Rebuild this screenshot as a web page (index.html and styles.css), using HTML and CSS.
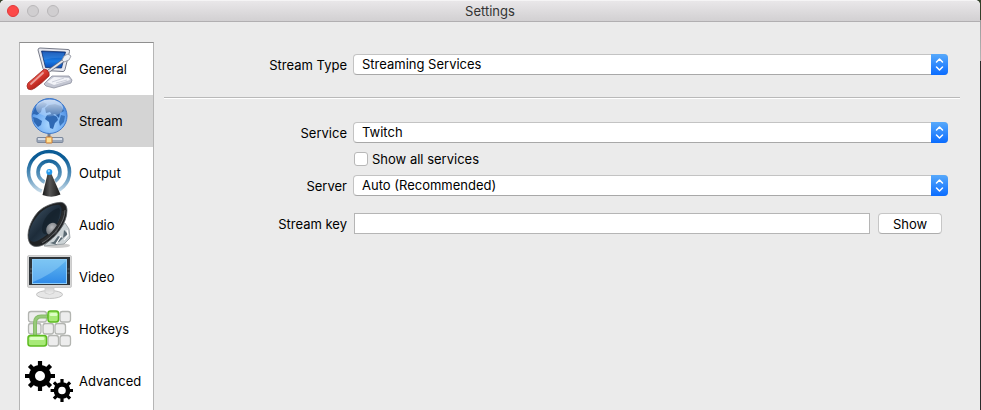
FILE: index.html
```html
<!DOCTYPE html>
<html lang="en">
<head>
  <meta charset="UTF-8">
  <meta name="viewport" content="width=device-width, initial-scale=1.0">
  <title>Settings</title>
  <link rel="stylesheet" href="styles.css">
</head>
<body>
  <div class="window">
    <header class="titlebar">
      <div class="lights">
        <button type="button" class="light close" aria-label="Close"></button>
        <button type="button" class="light" aria-label="Minimize"></button>
        <button type="button" class="light" aria-label="Zoom"></button>
      </div>
      <h1>Settings</h1>
    </header>

    <div class="content">
      <nav class="sidebar">
        <a href="#general">
          <svg viewBox="0 0 48 48" aria-hidden="true">
            <defs>
              <linearGradient id="pcScreen" x1="0" y1="0" x2="0" y2="1">
                <stop offset="0" stop-color="#0a3fa0"/><stop offset="0.6" stop-color="#1a7be4"/><stop offset="1" stop-color="#0a4cb8"/>
              </linearGradient>
              <linearGradient id="handle" x1="0" y1="0" x2="0.8" y2="1">
                <stop offset="0.1" stop-color="#f08478"/><stop offset="0.5" stop-color="#d83a30"/><stop offset="0.9" stop-color="#9c140e"/>
              </linearGradient>
            </defs>
            <path d="M19 39l8-8 17 0 3 4-1 3-17 5-8-2z" fill="#c3c6d2" stroke="#8d91a0" stroke-width="0.800"/>
            <path d="M22 37l7-5 15 1 1 2-16 5z" fill="#f2f3f8"/>
            <path d="M27 37l12-4M31 38l11-3" stroke="#c3c7d3" stroke-width="0.800"/>
            <path d="M15 3l28 1.500q2 0 1.500 2l-4.500 18q-0.500 2-2 2l-17.500-1q-2 0-2.500-2L13 5q0-2 2-2z" fill="#e6e7ef" stroke="#777b89"/>
            <path d="M16.500 6l24 1-4 16-16-0.500z" fill="url(#pcScreen)" stroke="#15356f" stroke-width="0.800"/>
            <path d="M17.500 7l22 1-1.500 5q-9-1-19 2z" fill="#5aa3f0" opacity="0.3"/>
            <path d="M21 28L39 15" stroke="#6b6f7b" stroke-width="3.200"/>
            <path d="M21 28L39 15" stroke="#e1e4ec" stroke-width="1.700"/>
            <path d="M37 15l2-4 4-2 3 2-2 4-5 2z" fill="#edf0f6" stroke="#8b8f9c" stroke-width="0.800"/>
            <path d="M17 26q2-3 5-1 3 3 2 6-7 7-14 12-4 3-7 1-2-3 0-6 6-5 14-12z" fill="url(#handle)" stroke="#a0261f" stroke-width="0.800"/>
            <path d="M18 28L6 39" stroke="#fff" stroke-width="1.800" stroke-linecap="round" opacity="0.5"/>
          </svg>
          <span>General</span>
        </a>
        <a href="#stream" class="selected" aria-current="page">
          <svg viewBox="0 0 48 48" aria-hidden="true">
            <defs>
              <radialGradient id="globe" cx="0.5" cy="0.75" r="0.75">
                <stop offset="0" stop-color="#a9d6ff"/><stop offset="0.6" stop-color="#6ba9f2"/><stop offset="1" stop-color="#3a78cf"/>
              </radialGradient>
              <linearGradient id="globeShine" x1="0" y1="0" x2="0" y2="1">
                <stop offset="0" stop-color="#fff" stop-opacity="0.75"/><stop offset="1" stop-color="#fff" stop-opacity="0.15"/>
              </linearGradient>
            </defs>
            <path d="M24 36v5" stroke="#777e8c" stroke-width="3"/>
            <rect x="12" y="40.500" width="26" height="5" rx="1" fill="#9ca8ba" stroke="#7b879b"/>
            <path d="M13 42h24" stroke="#e7edf5" stroke-width="1.500"/>
            <rect x="21" y="40" width="6" height="6" rx="0.500" fill="#ffdf91" stroke="#c8752a"/>
            <circle cx="24.500" cy="19" r="17.500" fill="url(#globe)" stroke="#3f78c9"/>
            <path d="M9 13q4-6 9-8l4 2-2 3-3 1-1 4-4 3-3-1-2 1z" fill="#2f68b4"/>
            <path d="M20 11l4-3 6-1 6 2 3 5-4 2-1 5-4-4-3 1-2-3-4 1z" fill="#2e64ab"/>
            <path d="M22 18l5-1 5 3 1 3-3 3-2 6-3-1-1-6-4-3z" fill="#2f69b4"/>
            <path d="M8 20l4 1 5 3-1 4-3 2-4-5z" fill="#2f69b4"/>
            <path d="M36 18l4 1-1 6-4 4-1-4z" fill="#3a75bd"/>
            <ellipse cx="24.500" cy="11" rx="13.500" ry="8.500" fill="url(#globeShine)"/>
          </svg>
          <span>Stream</span>
        </a>
        <a href="#output">
          <svg viewBox="0 0 48 48" aria-hidden="true">
            <defs>
              <linearGradient id="wave" gradientUnits="userSpaceOnUse" x1="0" y1="0" x2="0" y2="46">
                <stop offset="0.2" stop-color="#0b5c96"/><stop offset="0.6" stop-color="#5e96bd"/><stop offset="1" stop-color="#dce9f2"/>
              </linearGradient>
              <linearGradient id="mast">
                <stop offset="0" stop-color="#171717"/><stop offset="0.4" stop-color="#555"/><stop offset="1" stop-color="#171717"/>
              </linearGradient>
            </defs>
            <circle cx="24" cy="23" r="20.500" fill="none" stroke="url(#wave)" stroke-width="3.600"/>
            <circle cx="24" cy="23" r="11" fill="none" stroke="url(#wave)" stroke-width="3.600"/>
            <path d="M15 48L22.500 24h4L37 48z" fill="#fff"/>
            <path d="M22.500 25h4l9 20.500q-8 4-18 0.500z" fill="url(#mast)"/>
            <circle cx="24.300" cy="23" r="3" fill="#2399ed"/>
            <circle cx="23.800" cy="22" r="1.200" fill="#8ed2ff"/>
          </svg>
          <span>Output</span>
        </a>
        <a href="#audio">
          <svg viewBox="0 0 48 48" aria-hidden="true">
            <defs>
              <linearGradient id="cone" x1="0" y1="0" x2="1" y2="1">
                <stop offset="0" stop-color="#44586a"/><stop offset="0.5" stop-color="#1d2c3a"/><stop offset="1" stop-color="#3d5468"/>
              </linearGradient>
              <radialGradient id="hub" cx="0.4" cy="0.4">
                <stop offset="0" stop-color="#b9bbbe"/><stop offset="1" stop-color="#777b80"/>
              </radialGradient>
            </defs>
            <ellipse cx="32" cy="44.500" rx="13" ry="2.500" fill="#aaa" opacity="0.6"/>
            <path d="M40 22l4 6 1 9-6 6-20 2 8-8z" fill="#ccd3d6" stroke="#8f979b" stroke-width="0.800"/>
            <path d="M39 29l4 4-5 4zM33 35l5 2-4 4-6 1zM25 42l6-2 1 4z" fill="#5b6a73"/>
            <path d="M42 29l1 5-4 5M36 35l-5 8" stroke="#fff" stroke-width="1.200" fill="none"/>
            <path d="M34 1.500c5-1 8 3 8 8 0 13-11 27-23 34-6 3-13 3-15-3C1 33 5 20 13 11 19 5 28 2 34 1.500z" fill="#1f2123" stroke="#5a5f63" stroke-width="0.800"/>
            <path d="M32 4c4-1 5 3 4.500 8C35 22 24 34 14 39c-5 3-9 2-10-2C3 31 7 20 15 12 20 7 27 4 32 4z" fill="url(#cone)"/>
            <path d="M34 7C25 9 17 18 17 29q1 6 7 4c7-6 11-15 11-24z" fill="#121f2a" opacity="0.7"/>
            <ellipse cx="27" cy="28" rx="5.500" ry="6.500" transform="rotate(35 27 28)" fill="url(#hub)"/>
            <path d="M37 10c-1 12-11 24-22 30l3 2C30 35 40 22 40 10z" fill="#2b2d2f"/>
            <path d="M40 9c0 12-11 26-23 33" stroke="#6e7173" stroke-width="0.800" fill="none"/>
          </svg>
          <span>Audio</span>
        </a>
        <a href="#video">
          <svg viewBox="0 0 48 48" aria-hidden="true">
            <defs>
              <linearGradient id="tv" x1="0" y1="0" x2="0" y2="1">
                <stop offset="0" stop-color="#62b7ef"/><stop offset="1" stop-color="#2f8ae8"/>
              </linearGradient>
              <linearGradient id="stand" x1="0" y1="0" x2="0" y2="1">
                <stop offset="0" stop-color="#c9c9c9"/><stop offset="1" stop-color="#f0f0f0"/>
              </linearGradient>
            </defs>
            <ellipse cx="24.500" cy="41.500" rx="13" ry="4" fill="#e6e6e6" stroke="#c2c2c2"/>
            <path d="M20 33h9v7q-4 3-9 0z" fill="url(#stand)" stroke="#cdcdcd" stroke-width="0.800"/>
            <rect x="2.500" y="2.500" width="44" height="32" rx="1.500" fill="#d5d5d5" stroke="#cbcbcb"/>
            <rect x="4" y="4" width="41" height="28" fill="#2e3439"/>
            <path d="M5 16h2M5 20h2M42.500 16h2M42.500 20h2" stroke="#5d6469"/>
            <rect x="7.500" y="6.500" width="34" height="24" fill="url(#tv)" stroke="#8fcdf8"/>
            <path d="M8 7h33v1Q26 22 8 29z" fill="#a6dcfb" opacity="0.4"/>
          </svg>
          <span>Video</span>
        </a>
        <a href="#hotkeys">
          <svg viewBox="0 0 48 48" aria-hidden="true">
            <g fill="#ededed" stroke="#b3b5b1" stroke-width="1.300">
              <rect x="3.500" y="6.500" width="18" height="10.500" rx="2.500"/>
              <rect x="35" y="6.500" width="10.500" height="10.500" rx="2.500"/>
              <rect x="3.500" y="18.500" width="12.500" height="10.500" rx="2.500"/>
              <rect x="18" y="18.500" width="10.500" height="10.500" rx="2.500"/>
              <rect x="30" y="18.500" width="10.500" height="10.500" rx="2.500"/>
              <rect x="23" y="30.500" width="10.500" height="10.500" rx="2.500"/>
              <rect x="35" y="30.500" width="10.500" height="10.500" rx="2.500"/>
            </g>
            <path d="M10 32V18q0-6.500 6-6.500h9" fill="none" stroke="#86bb69" stroke-width="4"/>
            <path d="M10 32V18q0-6.500 6-6.500h9" fill="none" stroke="#97c97a" stroke-width="2"/>
            <g fill="#a8ea78" stroke="#5cba20" stroke-width="1.500">
              <rect x="23" y="6" width="10.500" height="11" rx="2.500"/>
              <rect x="3" y="30.500" width="18.500" height="10.500" rx="2.500"/>
            </g>
            <path d="M6 33.500h12M26 9.500h5" stroke="#dcffc5" stroke-width="3" stroke-linecap="round"/>
          </svg>
          <span>Hotkeys</span>
        </a>
        <a href="#advanced">
          <svg viewBox="0 0 48 48" aria-hidden="true">
            <defs>
              <g id="gear">
                <circle r="8" fill="none" stroke="#000" stroke-width="6"/>
                <path d="M0-15V-9M0 15V9M-15 0H-9M15 0H9M-10.600-10.600l4 4M10.600-10.600l-4 4M-10.600 10.600l4-4M10.600 10.600l-4-4" stroke="#000" stroke-width="4.200"/>
              </g>
            </defs>
            <use href="#gear" transform="translate(15 19)"/>
            <use href="#gear" transform="translate(37 33.500) scale(0.760)"/>
          </svg>
          <span>Advanced</span>
        </a>
      </nav>

      <main>
        <form class="settings">
          <div class="row type-row">
            <label for="stream-type">Stream Type</label>
            <div class="select">
              <select id="stream-type"><option>Streaming Services</option></select>
              <svg viewBox="0 0 17 21" aria-hidden="true"><path d="M5.500 8l3-3 3 3M5.500 13l3 3 3-3"/></svg>
            </div>
          </div>
          <hr>
          <div class="row">
            <label for="service">Service</label>
            <div class="select">
              <select id="service"><option>Twitch</option></select>
              <svg viewBox="0 0 17 21" aria-hidden="true"><path d="M5.500 8l3-3 3 3M5.500 13l3 3 3-3"/></svg>
            </div>
          </div>
          <div class="row check-row">
            <div class="check">
              <input type="checkbox" id="show-all">
              <label for="show-all">Show all services</label>
            </div>
          </div>
          <div class="row">
            <label for="server">Server</label>
            <div class="select">
              <select id="server"><option>Auto (Recommended)</option></select>
              <svg viewBox="0 0 17 21" aria-hidden="true"><path d="M5.500 8l3-3 3 3M5.500 13l3 3 3-3"/></svg>
            </div>
          </div>
          <div class="row key-row">
            <label for="stream-key">Stream key</label>
            <div class="key">
              <input type="password" id="stream-key">
              <button type="button">Show</button>
            </div>
          </div>
        </form>
      </main>
    </div>
  </div>
</body>
</html>
```
FILE: styles.css
```css
* {
  box-sizing: border-box;
}
body {
  margin: 0;
  padding-right: 1px;
  background: linear-gradient(#34402a 20px, #9a9a9a 20px, #b5b5b5 61px, #2b2b2b 61px);
  font-family: Inter, "Liberation Sans", sans-serif;
  font-size: 13px;
  line-height: 16px;
  color: #000;
}
.window {
  display: flex;
  flex-direction: column;
  min-height: 100vh;
  background: #ebebeb;
  border-radius: 5px 5px 0 0;
}
.titlebar {
  display: grid;
  grid-template-columns: 1fr auto 1fr;
  align-items: center;
  height: 22px;
  padding: 0 7px;
  background: linear-gradient(#e9e7e9, #d2d0d2);
  border-top: 1px solid #f5f4f5;
  border-bottom: 1px solid #b1afb1;
  border-radius: 5px 5px 0 0;
}
.titlebar h1 {
  margin: 0;
  font-size: 13px;
  font-weight: 400;
  color: #333;
}
.lights {
  display: flex;
  gap: 8px;
}
.light {
  width: 12px;
  height: 12px;
  padding: 0;
  background: #d0ced0;
  border: 1px solid #b9b7b9;
  border-radius: 50%;
}
.light.close {
  background: #fc4948;
  border-color: #e0383a;
}
.content {
  display: flex;
  flex: 1;
  gap: 10px;
  padding: 20px 20px 0 19px;
}
.sidebar {
  flex: 0 0 135px;
  background: #fff;
  border: 1px solid #b5b5b5;
  border-top-color: #8f8f8f;
  border-bottom: 0;
}
.sidebar a {
  display: flex;
  align-items: center;
  gap: 6px;
  height: 52px;
  padding-left: 5px;
  color: #000;
  text-decoration: none;
}
.sidebar a.selected {
  background: #d4d4d4;
}
.sidebar svg {
  width: 48px;
  height: 48px;
}
main {
  flex: 1;
  padding-top: 12px;
}
.row {
  display: grid;
  grid-template-columns: 183px 1fr;
  align-items: center;
  column-gap: 6px;
  padding-right: 12px;
}
.row > label {
  text-align: right;
}
hr {
  height: 2px;
  margin: 22px 0 23px;
  border: 0;
  border-top: 1px solid #b9b9b9;
  border-bottom: 1px solid #fff;
}
.select {
  position: relative;
  height: 21px;
}
.select select {
  display: block;
  width: 100%;
  height: 21px;
  padding: 0 24px 2px 8px;
  appearance: none;
  background: #fff;
  border: 1px solid #c3c3c3;
  border-bottom-color: #a8a8a8;
  border-radius: 4px;
  font: inherit;
  color: #000;
}
/* blue stepper at the end of a drop-down */
.select svg {
  position: absolute;
  top: 0;
  right: 0;
  width: 17px;
  height: 21px;
  background: linear-gradient(#57a9fb, #0a6cff);
  border-radius: 0 4px 4px 0;
  fill: none;
  stroke: #fff;
  stroke-width: 1.5;
  stroke-linecap: round;
  stroke-linejoin: round;
  pointer-events: none;
}
.check-row {
  padding-top: 8px;
  padding-bottom: 8px;
}
.check {
  display: flex;
  grid-column: 2;
  align-items: center;
  gap: 4px;
  padding-left: 1px;
}
.check input {
  width: 14px;
  height: 14px;
  margin: 0;
  appearance: none;
  background: #fff;
  border: 1px solid #b8b8b8;
  border-radius: 3px;
}
.check input:checked {
  background: #2a83fb;
}
.key-row {
  padding-top: 17px;
}
.key {
  display: flex;
  gap: 8px;
  padding: 0 6px 0 1px;
}
.key input {
  flex: 1;
  min-width: 0;
  height: 21px;
  padding: 0 4px;
  background: #fff;
  border: 1px solid #b5b5b5;
  font: inherit;
}
.key button {
  width: 64px;
  height: 21px;
  padding: 0;
  background: #fff;
  border: 1px solid #c6c6c6;
  border-bottom-color: #adadad;
  border-radius: 4px;
  font: inherit;
  color: #000;
}
```
